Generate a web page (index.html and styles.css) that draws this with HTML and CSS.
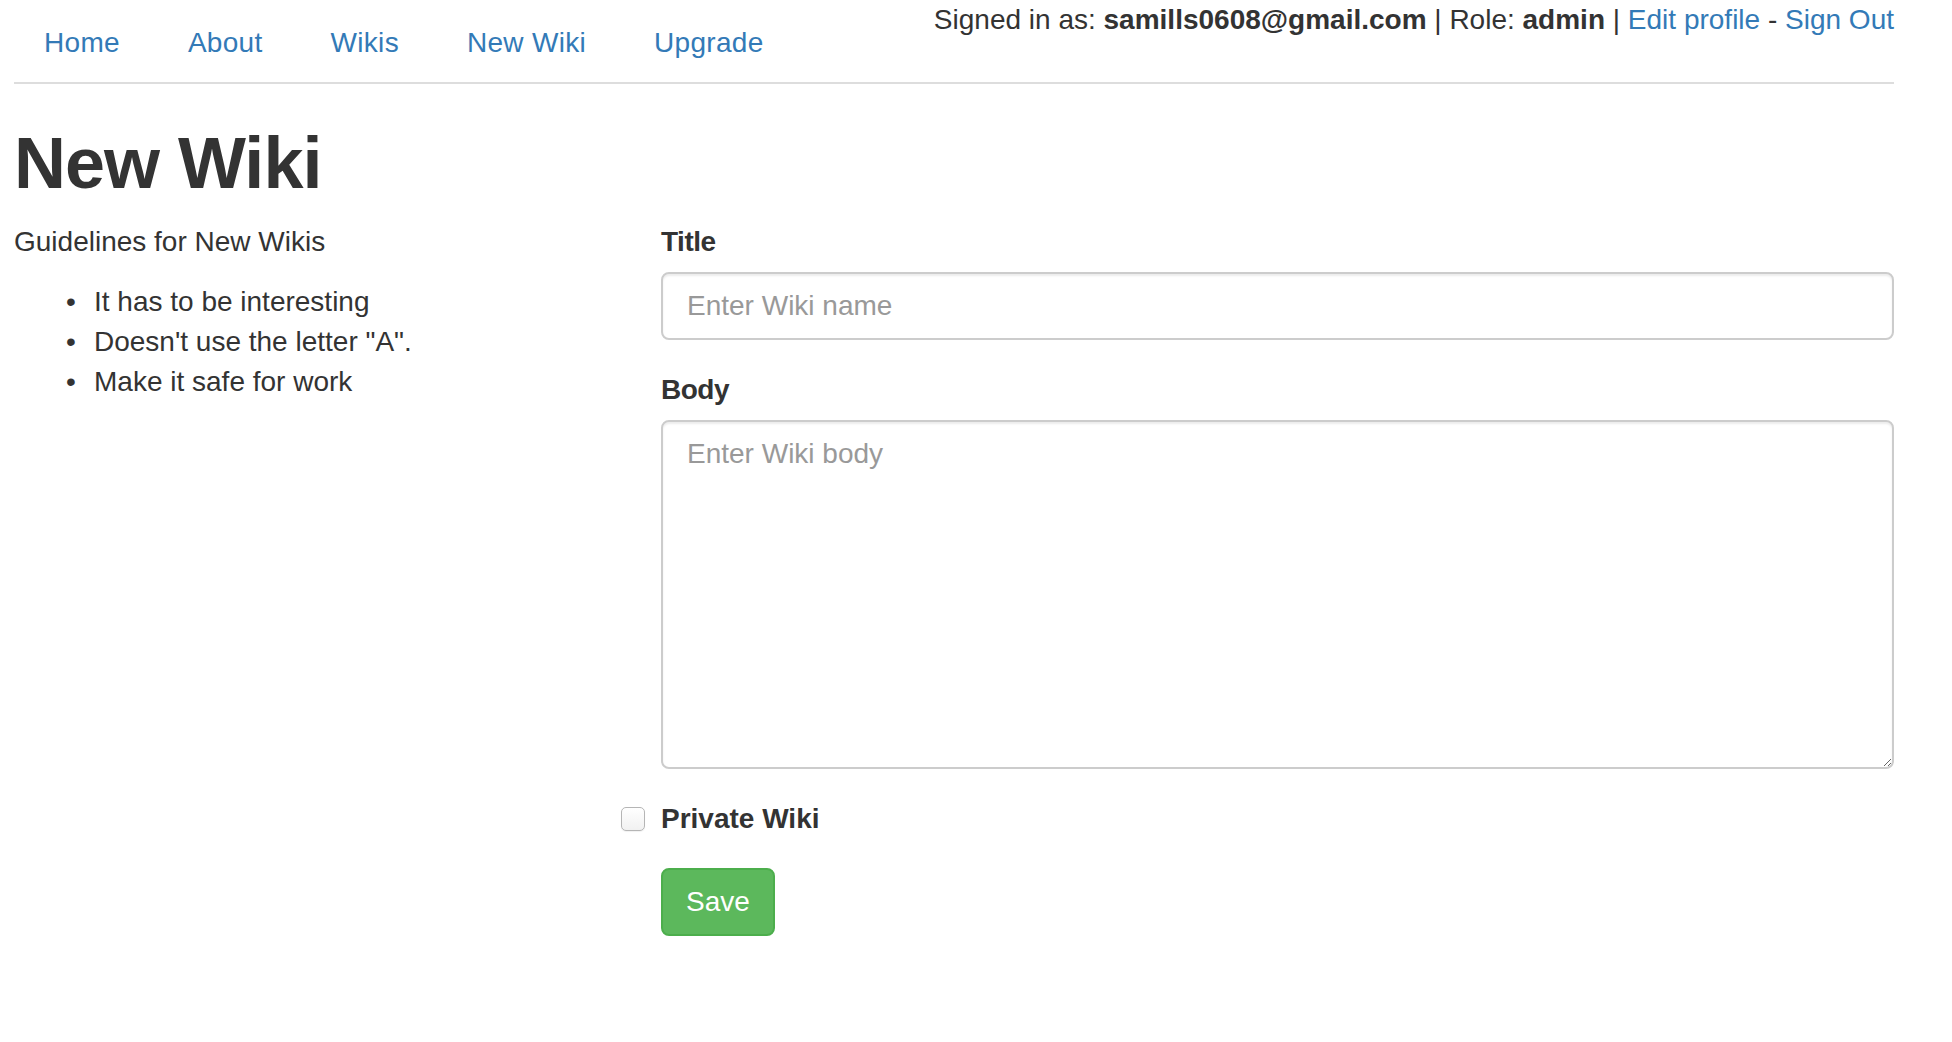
FILE: index.html
```html
<!DOCTYPE html>
<html lang="en">
<head>
<meta charset="utf-8">
<title>New Wiki</title>
<link rel="stylesheet" href="styles.css">
</head>
<body>
<div class="container">
  <header class="topbar">
    <ul class="nav">
      <li><a href="#">Home</a></li>
      <li><a href="#">About</a></li>
      <li><a href="#">Wikis</a></li>
      <li><a href="#">New Wiki</a></li>
      <li><a href="#">Upgrade</a></li>
    </ul>
    <div class="user-info">Signed in as: <strong>samills0608@gmail.com</strong> | Role: <strong>admin</strong> | <a href="#">Edit profile</a> - <a href="#">Sign Out</a></div>
  </header>

  <h1 class="page-title">New Wiki</h1>

  <div class="row">
    <div class="col-side">
      <p class="guide-title">Guidelines for New Wikis</p>
      <ul class="guide-list">
        <li>It has to be interesting</li>
        <li>Doesn't use the letter "A".</li>
        <li>Make it safe for work</li>
      </ul>
    </div>
    <form class="col-main">
      <div class="form-group">
        <label class="field-label" for="title">Title</label>
        <input class="form-control" id="title" type="text" placeholder="Enter Wiki name">
      </div>
      <div class="form-group">
        <label class="field-label" for="body">Body</label>
        <textarea class="form-control textarea" id="body" placeholder="Enter Wiki body"></textarea>
      </div>
      <div class="checkbox">
        <label class="check-label"><input class="check-input" type="checkbox"><span>Private Wiki</span></label>
      </div>
      <button class="btn-save" type="button">Save</button>
    </form>
  </div>
</div>
</body>
</html>
```

FILE: styles.css
```css
* { box-sizing: border-box; }

html, body {
  margin: 0;
  padding: 0;
  background: #fff;
}

body {
  font-family: "Liberation Sans", Arial, Helvetica, sans-serif;
  font-size: 28px;
  line-height: 40px;
  color: #333;
}

a {
  color: #337ab7;
  text-decoration: none;
}

.container {
  width: 1880px;
  margin-left: 14px;
}

.topbar {
  display: flex;
  justify-content: space-between;
  align-items: flex-start;
  border-bottom: 2px solid #ddd;
  height: 84px;
}

.nav {
  list-style: none;
  margin: 0;
  padding: 0;
  display: flex;
}

.nav li + li {
  margin-left: 8px;
}

.nav a {
  display: block;
  padding: 23px 30px 19px;
  line-height: 40px;
  letter-spacing: 0.3px;
}

.user-info {
  line-height: 40px;
  white-space: nowrap;
}

.user-info strong {
  font-weight: bold;
}

.page-title {
  margin: 40px 0 19px;
  font-size: 72px;
  line-height: 79px;
  font-weight: bold;
  letter-spacing: -1px;
  color: #333;
}

.row {
  display: flex;
  gap: 60px;
}

.col-side {
  width: 587px;
  flex: none;
}

.guide-title {
  margin: 0 0 20px;
}

.guide-list {
  margin: 0;
  padding-left: 80px;
  list-style: none;
}

.guide-list li::before {
  content: "\2022";
  display: inline-block;
  width: 28px;
  margin-left: -28px;
}

.col-main {
  flex: 1;
  margin: 0;
}

.form-group {
  margin-bottom: 30px;
}

.field-label {
  display: inline-block;
  font-weight: bold;
  margin-bottom: 10px;
  letter-spacing: -0.5px;
}

.form-control {
  display: block;
  width: 100%;
  height: 68px;
  padding: 12px 24px;
  font-family: inherit;
  font-size: 28px;
  line-height: 40px;
  color: #555;
  background: #fff;
  border: 2px solid #ccc;
  border-radius: 8px;
  box-shadow: inset 0 2px 2px rgba(0, 0, 0, 0.075);
  outline: none;
}

.form-control::placeholder {
  color: #999;
}

.textarea {
  height: 349px;
  resize: vertical;
}

.checkbox {
  margin: 0 0 29px;
}

.check-label {
  display: flex;
  align-items: center;
  gap: 16px;
  margin-left: -40px;
  font-weight: bold;
}

.check-input {
  appearance: none;
  -webkit-appearance: none;
  width: 24px;
  height: 24px;
  margin: 0;
  border: 1px solid #b5b5b5;
  border-radius: 5px;
  background: linear-gradient(#fff, #f1f1f1);
  box-shadow: 0 1px 1px rgba(0, 0, 0, 0.06);
}

.btn-save {
  display: inline-block;
  height: 68px;
  padding: 12px 23px;
  font-family: inherit;
  font-size: 28px;
  line-height: 40px;
  color: #fff;
  background: #5cb85c;
  border: 2px solid #4cae4c;
  border-radius: 8px;
  cursor: pointer;
}
```
